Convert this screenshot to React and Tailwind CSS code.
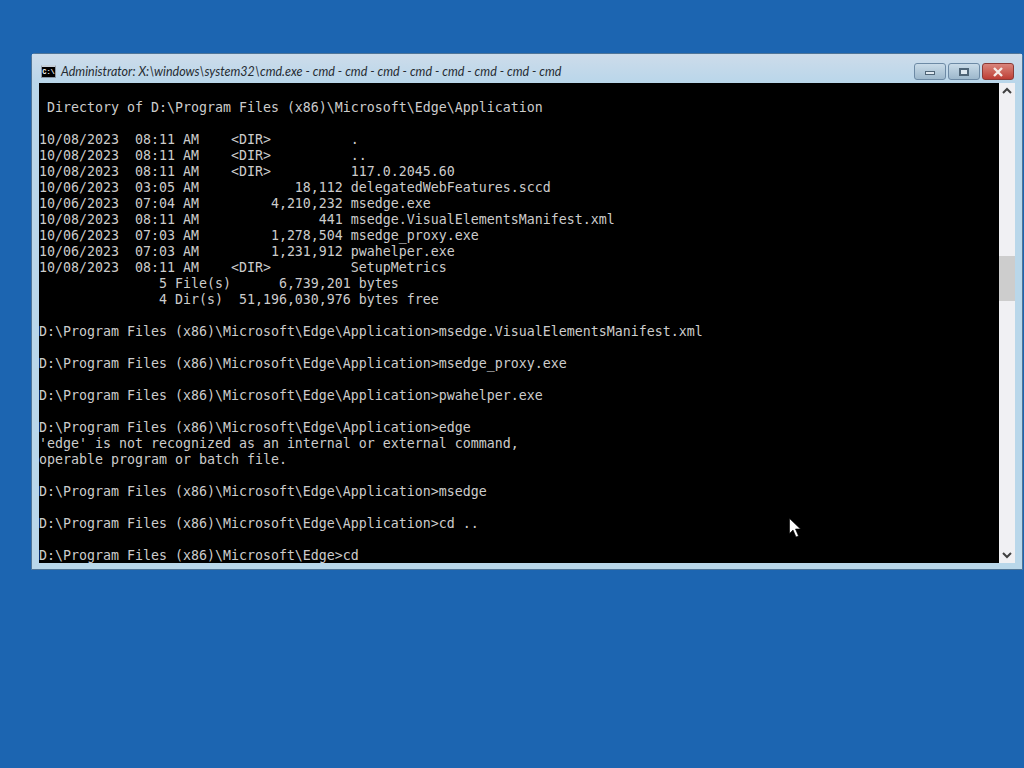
const lines = [
  '',
  ' Directory of D:\\Program Files (x86)\\Microsoft\\Edge\\Application',
  '',
  '10/08/2023  08:11 AM    <DIR>          .',
  '10/08/2023  08:11 AM    <DIR>          ..',
  '10/08/2023  08:11 AM    <DIR>          117.0.2045.60',
  '10/06/2023  03:05 AM            18,112 delegatedWebFeatures.sccd',
  '10/06/2023  07:04 AM         4,210,232 msedge.exe',
  '10/08/2023  08:11 AM               441 msedge.VisualElementsManifest.xml',
  '10/06/2023  07:03 AM         1,278,504 msedge_proxy.exe',
  '10/06/2023  07:03 AM         1,231,912 pwahelper.exe',
  '10/08/2023  08:11 AM    <DIR>          SetupMetrics',
  '               5 File(s)      6,739,201 bytes',
  '               4 Dir(s)  51,196,030,976 bytes free',
  '',
  'D:\\Program Files (x86)\\Microsoft\\Edge\\Application>msedge.VisualElementsManifest.xml',
  '',
  'D:\\Program Files (x86)\\Microsoft\\Edge\\Application>msedge_proxy.exe',
  '',
  'D:\\Program Files (x86)\\Microsoft\\Edge\\Application>pwahelper.exe',
  '',
  'D:\\Program Files (x86)\\Microsoft\\Edge\\Application>edge',
  "'edge' is not recognized as an internal or external command,",
  'operable program or batch file.',
  '',
  'D:\\Program Files (x86)\\Microsoft\\Edge\\Application>msedge',
  '',
  'D:\\Program Files (x86)\\Microsoft\\Edge\\Application>cd ..',
  '',
  'D:\\Program Files (x86)\\Microsoft\\Edge>cd',
];

function CmdIcon() {
  return (
    <div className="w-[15px] h-[13px] bg-black border border-[#8a97a5] border-t-[2px] border-t-[#c5d0da] flex items-center justify-center">
      <span className="text-white text-[7px] leading-none font-bold font-['Liberation_Mono',monospace]">C:\</span>
    </div>
  );
}

function CaptionButton({ className, children }) {
  return (
    <div className={`h-[17px] rounded-[3px] border flex items-center justify-center ${className}`}>
      {children}
    </div>
  );
}

export default function App() {
  return (
    <div className="relative w-[1024px] h-[768px] overflow-hidden bg-[#1c65b1] pt-[53px] pl-[31px]">
      <div className="w-[992px] h-[517px] flex flex-col rounded-t-[4px] border border-[#4f7598] bg-[#b9d7ea]">
        {/* title bar */}
        <div className="h-[29px] shrink-0 flex items-center pt-[6px] pl-[9px] pr-[8px] bg-gradient-to-b from-[#cddcea] to-[#b9d6ea]">
          <CmdIcon />
          <span className="ml-[5px] mt-[1px] text-[12.5px] italic text-[#262c32] font-['Lato','Liberation_Sans',sans-serif]">
            Administrator: X:\windows\system32\cmd.exe - cmd - cmd - cmd - cmd - cmd - cmd - cmd - cmd
          </span>
          <div className="ml-auto flex gap-[2px]">
            <CaptionButton className="w-[32px] border-[#6d8aa5] bg-gradient-to-b from-[#c9dbe8] to-[#9db8cc]">
              <div className="w-[10px] h-[4px] mt-[3px] bg-[#dfe9f1] border border-[#4f6577]" />
            </CaptionButton>
            <CaptionButton className="w-[32px] border-[#6d8aa5] bg-gradient-to-b from-[#c9dbe8] to-[#9db8cc]">
              <div className="w-[10px] h-[8px] bg-[#dfe9f1] border-2 border-[#4f6577]" />
            </CaptionButton>
            <CaptionButton className="w-[32px] border-[#8b3a36] bg-gradient-to-b from-[#d9857c] to-[#bd3d35]">
              <svg width="12" height="10" viewBox="0 0 12 10">
                <path d="M2 1l8 8M10 1l-8 8" stroke="#f5ece8" strokeWidth="2.4" fill="none" />
              </svg>
            </CaptionButton>
          </div>
        </div>
        {/* console + scrollbar */}
        <div className="flex pl-[7px]">
          <pre className="w-[960px] h-[480px] pt-[1px] overflow-hidden bg-black text-[#cccccc] text-[13.29px] leading-[16px] font-['DejaVu_Sans_Mono',monospace]">
            {lines.map((line, i) => (
              <div key={i} className="h-[16px]">{line}</div>
            ))}
          </pre>
          <div className="w-[16px] h-[480px] bg-[#f0f0f3] flex flex-col items-center">
            <svg className="mt-[4px]" width="10" height="8" viewBox="0 0 10 8">
              <path d="M1 6l4-4 4 4" stroke="#404040" strokeWidth="2" fill="none" />
            </svg>
            <div className="w-[16px] h-[45px] mt-[161px] bg-[#cdcdcd]" />
            <svg className="mt-auto mb-[4px]" width="10" height="8" viewBox="0 0 10 8">
              <path d="M1 2l4 4 4-4" stroke="#404040" strokeWidth="2" fill="none" />
            </svg>
          </div>
        </div>
      </div>
      {/* mouse pointer */}
      <svg className="absolute left-[789px] top-[518px]" width="13" height="22" viewBox="0 0 13 22">
        <path d="M0.5 0.5v15l3.5-3.5 3 7 2.5-1-3-7h5z" fill="#ffffff" stroke="#000000" strokeWidth="0.6" />
      </svg>
    </div>
  );
}
